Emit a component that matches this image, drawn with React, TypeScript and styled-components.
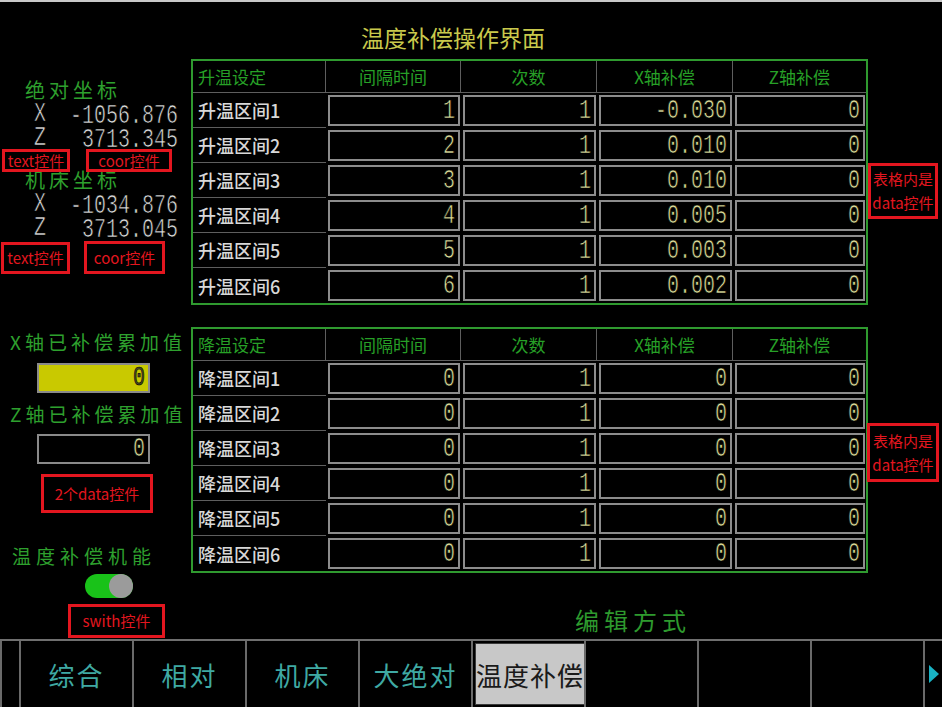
import React from "react";
import styled, { createGlobalStyle } from "styled-components";

const CJK = `"Noto Sans CJK SC", "Noto Sans", sans-serif`;
const MONO = `"Liberation Mono", "DejaVu Sans Mono", monospace`;

const GlobalStyle = createGlobalStyle`
  html, body {
    margin: 0;
    padding: 0;
    background: #000;
  }
  body {
    font-family: ${CJK};
  }
`;

const Screen = styled.div`
  position: relative;
  width: 942px;
  height: 707px;
  box-sizing: border-box;
  border-top: 2px solid #c9c9c9;
  background: #000;
  display: flex;
  flex-direction: column;
  overflow: hidden;
  font-family: ${CJK};
`;

const Main = styled.div`
  display: grid;
  grid-template-columns: 191px 1fr;
  height: 639px;
`;

/* ---------- left panel ---------- */

const LeftPanel = styled.div`
  display: flex;
  flex-direction: column;
  padding-top: 76px;
`;

const GroupTitle = styled.div<{ $gap?: number }>`
  color: #2ea02e;
  font-size: 20px;
  line-height: 24px;
  letter-spacing: 4px;
  padding-left: 25px;
  margin-top: ${(p) => p.$gap || 0}px;
`;

const CoordRow = styled.div`
  display: grid;
  grid-template-columns: 24px 1fr;
  align-items: center;
  width: 178px;
  box-sizing: border-box;
  padding-left: 34px;
  height: 24px;
  color: #dcdcdc;
`;

const CoordValue = styled.div`
  text-align: right;
`;

const Digits = styled.span<{ $color?: string }>`
  display: inline-block;
  font-family: ${MONO};
  font-size: 20px;
  line-height: 16px;
  color: ${(p) => p.$color || "inherit"};
  font-variant-numeric: slashed-zero;
  -webkit-text-stroke: 0.5px #000;
  transform: scaleY(1.38);
  transform-origin: center;
`;

const AccumTitle = styled.div<{ $gap: number; $spacing?: number; $indent?: number }>`
  color: #2ea02e;
  font-size: 19px;
  line-height: 24px;
  letter-spacing: ${(p) => p.$spacing || 4}px;
  padding-left: ${(p) => p.$indent || 10}px;
  margin-top: ${(p) => p.$gap}px;
  white-space: nowrap;
`;

const AccumBox = styled.div<{ $gap: number; $filled?: boolean }>`
  margin-top: ${(p) => p.$gap}px;
  margin-left: 37px;
  width: 113px;
  height: 30px;
  box-sizing: border-box;
  border: 2px solid #8a8a8a;
  background: ${(p) => (p.$filled ? "#c9c900" : "#000")};
  display: flex;
  align-items: center;
  justify-content: flex-end;
  padding-right: 3px;
`;

const Toggle = styled.div`
  margin-top: 6px;
  margin-left: 85px;
  width: 48px;
  height: 24px;
  border-radius: 12px;
  background: #19c219;
  display: flex;
  justify-content: flex-end;
`;

const Knob = styled.div`
  width: 24px;
  height: 24px;
  border-radius: 50%;
  background: #9b9b9b;
`;

/* ---------- right panel ---------- */

const RightPanel = styled.div`
  display: flex;
  flex-direction: column;
`;

const Title = styled.div`
  height: 57px;
  box-sizing: border-box;
  padding-top: 22px;
  padding-left: 170px;
  color: #c9c94c;
  font-size: 23px;
  line-height: 26px;
`;

const Table = styled.div<{ $gap?: number }>`
  display: grid;
  grid-template-columns: 133px 135px 136px 136px 133px;
  grid-template-rows: 32px repeat(6, 35px);
  width: fit-content;
  border: 2px solid #2f9a2f;
  margin-top: ${(p) => p.$gap || 0}px;
`;

const HeadCell = styled.div<{ $left?: boolean; $last?: boolean }>`
  display: flex;
  align-items: center;
  justify-content: ${(p) => (p.$left ? "flex-start" : "center")};
  padding-left: ${(p) => (p.$left ? 5 : 0)}px;
  color: #27a027;
  font-size: 17px;
  border-right: ${(p) => (p.$last ? "none" : "1px solid #5e5e5e")};
  border-bottom: 1px solid #5e5e5e;
`;

const LabelCell = styled.div<{ $last?: boolean }>`
  display: flex;
  align-items: center;
  padding-left: 5px;
  color: #d8d8d8;
  font-size: 18px;
  font-weight: 500;
  border-bottom: ${(p) => (p.$last ? "none" : "1px solid #5e5e5e")};
`;

const DataCell = styled.div`
  padding: 2px 1px 2px 2px;
  box-sizing: border-box;
`;

const Field = styled.div`
  height: 100%;
  box-sizing: border-box;
  border: 2px solid #8c8c8c;
  display: flex;
  align-items: center;
  justify-content: flex-end;
  padding-right: 3px;
`;

const EditLabel = styled.div`
  margin-top: 34px;
  padding-left: 384px;
  color: #2e9a2e;
  font-size: 24px;
  line-height: 26px;
  letter-spacing: 5px;
`;

/* ---------- bottom bar ---------- */

const TabBar = styled.div`
  display: flex;
  height: 68px;
  box-sizing: border-box;
  border-top: 2px solid #6f6f6f;
`;

const TabStub = styled.div`
  width: 19px;
  border-left: 2px solid #6a6a6a;
  box-sizing: border-box;
`;

const Tab = styled.div`
  width: 113px;
  box-sizing: border-box;
  border-left: 2px solid #6a6a6a;
  padding: 2px;
  display: flex;
`;

const TabFace = styled.div<{ $active?: boolean }>`
  flex: 1;
  display: flex;
  align-items: center;
  justify-content: center;
  white-space: nowrap;
  box-sizing: border-box;
  border: 1px solid ${(p) => (p.$active ? "#3a3a3a" : "transparent")};
  background: ${(p) => (p.$active ? "#c8c8c8" : "transparent")};
  color: ${(p) => (p.$active ? "#1a1a1a" : "#3fa9a3")};
  font-size: 26px;
  letter-spacing: ${(p) => (p.$active ? 1 : 2)}px;
`;

const ArrowCell = styled.div`
  flex: 1;
  border-left: 2px solid #6a6a6a;
  display: flex;
  align-items: center;
  justify-content: center;
`;

const Arrow = styled.div`
  width: 0;
  height: 0;
  border-top: 9px solid transparent;
  border-bottom: 9px solid transparent;
  border-left: 10px solid #19b3c4;
`;

/* ---------- annotation overlays ---------- */

const Note = styled.div<{ $x: number; $y: number; $w: number; $h: number }>`
  position: absolute;
  left: ${(p) => p.$x}px;
  top: ${(p) => p.$y - 2}px;
  width: ${(p) => p.$w}px;
  height: ${(p) => p.$h}px;
  box-sizing: border-box;
  border: 3px solid #e3161f;
  background: #000;
  color: #e3161f;
  font-size: 15px;
  line-height: 24px;
  display: flex;
  flex-direction: column;
  align-items: center;
  justify-content: center;
  white-space: nowrap;
`;

/* ---------- data ---------- */

const heads = ["间隔时间", "次数", "X轴补偿", "Z轴补偿"];

const riseRows = [
  ["1", "1", "-0.030", "0"],
  ["2", "1", "0.010", "0"],
  ["3", "1", "0.010", "0"],
  ["4", "1", "0.005", "0"],
  ["5", "1", "0.003", "0"],
  ["6", "1", "0.002", "0"],
];

const fallRows = Array.from({ length: 6 }, () => ["0", "1", "0", "0"]);

const tabs = ["综合", "相对", "机床", "大绝对", "温度补偿", "", "", ""];

interface CompTableProps {
  title: string;
  prefix: string;
  rows: string[][];
  gap?: number;
}

function CompTable({ title, prefix, rows, gap }: CompTableProps) {
  return (
    <Table $gap={gap}>
      <HeadCell $left>{title}</HeadCell>
      {heads.map((h, i) => (
        <HeadCell key={h} $last={i === heads.length - 1}>
          {h}
        </HeadCell>
      ))}
      {rows.map((row, r) => (
        <React.Fragment key={r}>
          <LabelCell $last={r === rows.length - 1}>
            {prefix}
            {r + 1}
          </LabelCell>
          {row.map((v, c) => (
            <DataCell key={c}>
              <Field>
                <Digits $color="#e0e09c">{v}</Digits>
              </Field>
            </DataCell>
          ))}
        </React.Fragment>
      ))}
    </Table>
  );
}

function Coord({ axis, value }: { axis: string; value: string }) {
  return (
    <CoordRow>
      <Digits>{axis}</Digits>
      <CoordValue>
        <Digits>{value}</Digits>
      </CoordValue>
    </CoordRow>
  );
}

export default function App() {
  return (
    <Screen>
      <GlobalStyle />
      <Main>
        <LeftPanel>
          <GroupTitle>绝对坐标</GroupTitle>
          <Coord axis="X" value="-1056.876" />
          <Coord axis="Z" value="3713.345" />
          <GroupTitle $gap={18}>机床坐标</GroupTitle>
          <Coord axis="X" value="-1034.876" />
          <Coord axis="Z" value="3713.045" />

          <AccumTitle $gap={90}>X轴已补偿累加值</AccumTitle>
          <AccumBox $gap={9} $filled>
            <Digits $color="#4a4a20">0</Digits>
          </AccumBox>
          <AccumTitle $gap={9}>Z轴已补偿累加值</AccumTitle>
          <AccumBox $gap={8}>
            <Digits $color="#e0e09c">0</Digits>
          </AccumBox>

          <AccumTitle $gap={80} $spacing={5} $indent={12}>
            温度补偿机能
          </AccumTitle>
          <Toggle>
            <Knob />
          </Toggle>
        </LeftPanel>

        <RightPanel>
          <Title>温度补偿操作界面</Title>
          <CompTable title="升温设定" prefix="升温区间" rows={riseRows} />
          <CompTable title="降温设定" prefix="降温区间" rows={fallRows} gap={22} />
          <EditLabel>编辑方式</EditLabel>
        </RightPanel>
      </Main>

      <TabBar>
        <TabStub />
        {tabs.map((t, i) => (
          <Tab key={i}>
            <TabFace $active={t === "温度补偿"}>{t}</TabFace>
          </Tab>
        ))}
        <ArrowCell>
          <Arrow />
        </ArrowCell>
      </TabBar>

      <Note $x={2} $y={149} $w={68} $h={23}>text控件</Note>
      <Note $x={86} $y={149} $w={86} $h={23}>coor控件</Note>
      <Note $x={1} $y={242} $w={69} $h={32}>text控件</Note>
      <Note $x={84} $y={241} $w={81} $h={33}>coor控件</Note>
      <Note $x={868} $y={163} $w={70} $h={56}>
        <span>表格内是</span>
        <span>data控件</span>
      </Note>
      <Note $x={867} $y={423} $w={72} $h={59}>
        <span>表格内是</span>
        <span>data控件</span>
      </Note>
      <Note $x={41} $y={474} $w={112} $h={39}>2个data控件</Note>
      <Note $x={68} $y={604} $w={97} $h={34}>swith控件</Note>
    </Screen>
  );
}
